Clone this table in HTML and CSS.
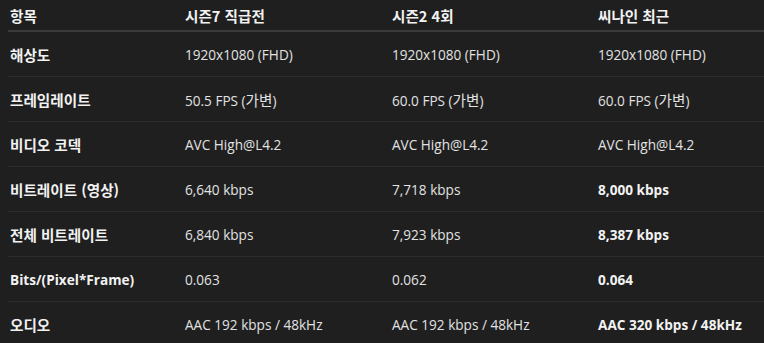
FILE: index.html
```html
<!DOCTYPE html>
<html lang="ko">
<head>
<meta charset="utf-8">
<link rel="stylesheet" href="styles.css">
</head>
<body>
<div class="wrap">
<table class="cmp">
<colgroup><col class="c1"><col class="c2"><col class="c3"><col class="c4"></colgroup>
<thead>
<tr><th><span class="ko">항목</span></th><th><span class="ko">시즌7 직급전</span></th><th><span class="ko">시즌2 4회</span></th><th><span class="ko">씨나인 최근</span></th></tr>
</thead>
<tbody>
<tr><td class="k"><span class="ko">해상도</span></td><td>1920x1080 (FHD)</td><td>1920x1080 (FHD)</td><td>1920x1080 (FHD)</td></tr>
<tr><td class="k"><span class="ko">프레임레이트</span></td><td>50.5 FPS (<span class="ko">가변</span>)</td><td>60.0 FPS (<span class="ko">가변</span>)</td><td>60.0 FPS (<span class="ko">가변</span>)</td></tr>
<tr><td class="k"><span class="ko">비디오 코덱</span></td><td>AVC High@L4.2</td><td>AVC High@L4.2</td><td>AVC High@L4.2</td></tr>
<tr><td class="k"><span class="ko">비트레이트 (영상)</span></td><td>6,640 kbps</td><td>7,718 kbps</td><td class="b">8,000 kbps</td></tr>
<tr><td class="k"><span class="ko">전체 비트레이트</span></td><td>6,840 kbps</td><td>7,923 kbps</td><td class="b">8,387 kbps</td></tr>
<tr><td class="k">Bits/(Pixel*Frame)</td><td>0.063</td><td>0.062</td><td class="b">0.064</td></tr>
<tr><td class="k"><span class="ko">오디오</span></td><td>AAC 192 kbps / 48kHz</td><td>AAC 192 kbps / 48kHz</td><td class="b">AAC 320 kbps / 48kHz</td></tr>
</tbody>
</table>
</div>
</body>
</html>
```
FILE: styles.css
```css
html, body {
  margin: 0;
  background: #1f1f1f;
}
.wrap {
  padding-left: 8px;
  overflow: hidden;
}
.cmp {
  border-collapse: collapse;
  table-layout: fixed;
  width: 756px;
  font-family: "Open Sans", "Noto Sans CJK KR", sans-serif;
  font-size: 13.6px;
  color: #e2e2e2;
}
.ko {
  font-family: "Noto Sans CJK KR", sans-serif;
  font-size: 14.6px;
}
.c1 { width: 175px; }
.c2 { width: 207px; }
.c3 { width: 206px; }
.cmp th {
  height: 30px;
  padding: 0 0 0 2px;
  text-align: left;
  font-weight: 700;
  color: #f2f2f2;
  border-bottom: 2px solid #3a3a3a;
  vertical-align: middle;
}
.cmp td {
  height: 44px;
  padding: 0 0 0 2px;
  border-bottom: 1px solid #2b2b2b;
  vertical-align: middle;
}
.cmp tr:last-child td { border-bottom: none; }
.cmp td.k, .cmp td.b {
  font-weight: 700;
  color: #f2f2f2;
}
```
